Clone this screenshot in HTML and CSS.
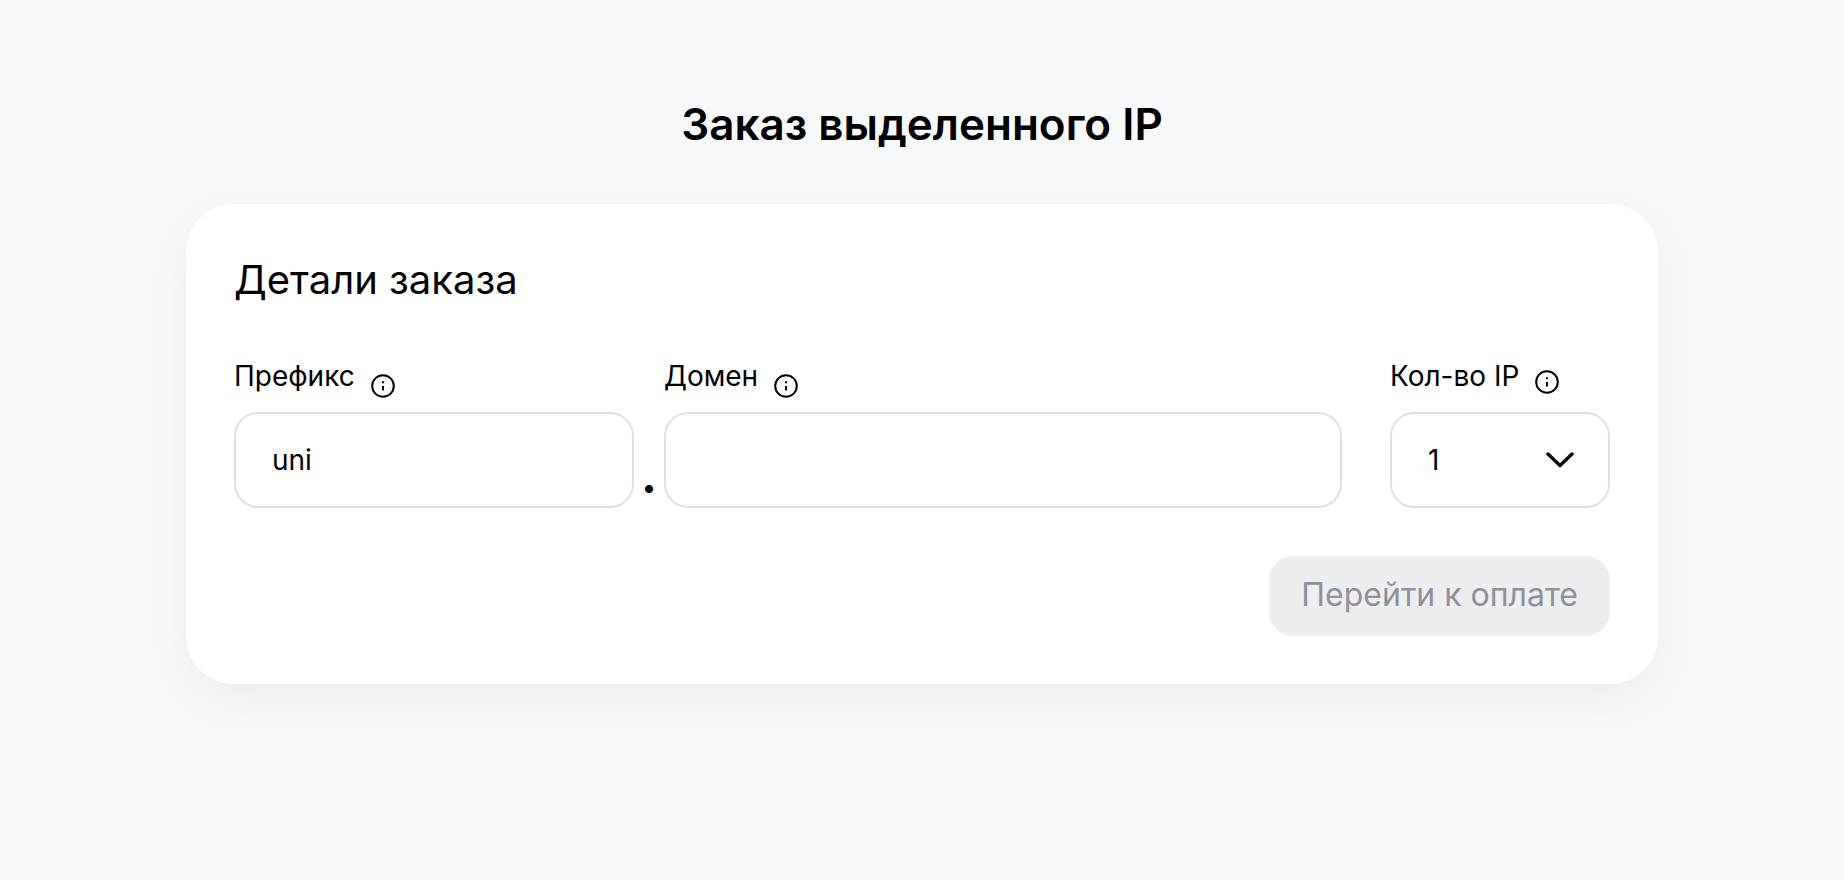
FILE: index.html
```html
<!DOCTYPE html>
<html lang="ru">
<head>
<meta charset="utf-8">
<title>Заказ выделенного IP</title>
<link rel="stylesheet" href="styles.css">
</head>
<body>
<main class="page">
  <h1 class="title">Заказ выделенного IP</h1>
  <form class="card">
    <h2 class="subtitle">Детали заказа</h2>
    <div class="fields">
      <div class="field prefix">
        <div class="label-row">
          <label for="prefix">Префикс</label>
          <svg class="info" viewBox="0 0 24 24"><circle cx="12" cy="12" r="10.8"/><path d="M12 7.3v2M12 12v4.4"/></svg>
        </div>
        <input class="control" id="prefix" type="text" value="uni">
      </div>
      <span class="separator">.</span>
      <div class="field domain">
        <div class="label-row">
          <label for="domain">Домен</label>
          <svg class="info" viewBox="0 0 24 24"><circle cx="12" cy="12" r="10.8"/><path d="M12 7.3v2M12 12v4.4"/></svg>
        </div>
        <input class="control" id="domain" type="text">
      </div>
      <div class="field count">
        <div class="label-row raised">
          <label for="count">Кол-во IP</label>
          <svg class="info" viewBox="0 0 24 24"><circle cx="12" cy="12" r="10.8"/><path d="M12 7.3v2M12 12v4.4"/></svg>
        </div>
        <div class="select-wrap">
          <select class="control" id="count"><option>1</option></select>
          <svg class="chevron" viewBox="0 0 28 16"><path d="M2 2l12 11.6L26 2"/></svg>
        </div>
      </div>
    </div>
    <button class="submit" type="submit" disabled>Перейти к оплате</button>
  </form>
</main>
</body>
</html>
```
FILE: styles.css
```css
* {
  box-sizing: border-box;
}

body {
  margin: 0;
  background: #f7f8fa;
  color: #000;
  font-family: Inter, "Liberation Sans", sans-serif;
}

.page {
  max-width: 1472px;
  min-height: 100vh;
  margin: 0 auto;
  padding: 96px 0;
}

.title {
  margin: 0 0 52px;
  font-size: 44px;
  line-height: 56px;
  font-weight: 600;
  text-align: center;
}

.card {
  display: flex;
  flex-direction: column;
  padding: 48px;
  border-radius: 48px;
  background: #fff;
  box-shadow: 0 16px 48px rgba(0, 0, 0, 0.05);
}

.subtitle {
  margin: 0 0 48px;
  font-size: 40px;
  line-height: 56px;
  font-weight: 400;
}

.fields {
  display: flex;
  align-items: flex-end;
}

.field {
  display: flex;
  flex-direction: column;
}

.prefix {
  flex: 0 0 400px;
}

.domain {
  flex: 1;
  margin-right: 48px;
}

.count {
  flex: 0 0 220px;
}

.label-row {
  display: flex;
  gap: 16px;
  height: 56px;
  font-size: 28px;
  line-height: 40px;
}

.info {
  width: 24px;
  height: 24px;
  margin-top: 18px;
  fill: none;
  stroke: #000;
  stroke-width: 2;
}

.raised .info {
  margin-top: 14px;
}

.control {
  width: 100%;
  height: 96px;
  padding: 0 36px;
  border: 2px solid #e0e0e0;
  border-radius: 24px;
  background: #fff;
  color: #000;
  font: inherit;
  font-size: 28px;
  appearance: none;
}

.separator {
  flex: 0 0 30px;
  font-size: 48px;
  line-height: 64px;
  font-weight: 700;
  text-align: center;
}

.select-wrap {
  position: relative;
}

.chevron {
  position: absolute;
  top: 40px;
  right: 36px;
  width: 28px;
  height: 16px;
  fill: none;
  stroke: #000;
  stroke-width: 3.4;
  stroke-linecap: round;
  stroke-linejoin: round;
  pointer-events: none;
}

.submit {
  align-self: flex-end;
  margin-top: 48px;
  height: 80px;
  padding: 0 32px 4px;
  border: 0;
  border-radius: 24px;
  background: #edeef0;
  color: #8f909a;
  font: inherit;
  font-size: 32px;
}
```
